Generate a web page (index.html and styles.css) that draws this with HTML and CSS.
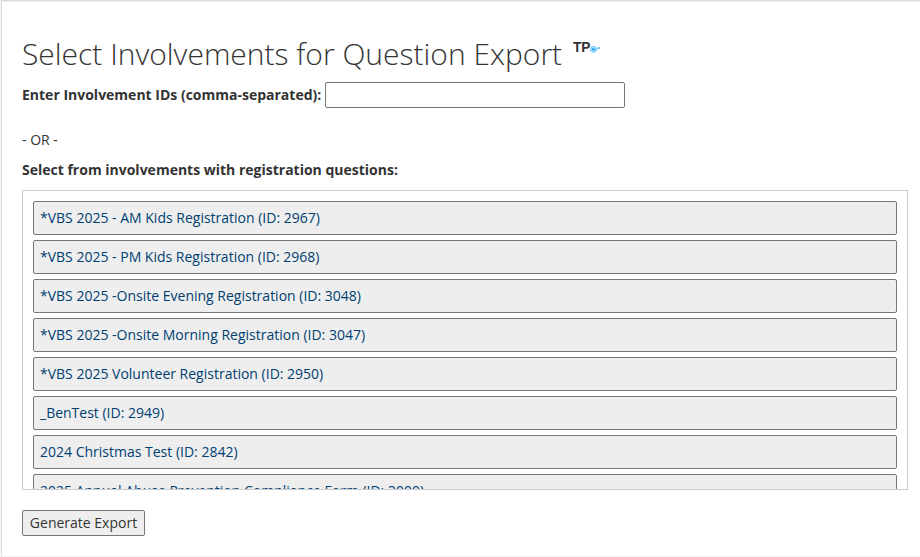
FILE: index.html
```html
<!DOCTYPE html>
<html lang="en">
<head>
<meta charset="utf-8">
<title>Question Export</title>
<link rel="stylesheet" href="styles.css">
</head>
<body>
<main class="panel">
  <header class="heading">
    <h1>Select Involvements for Question Export</h1>
    <svg class="logo" width="30" height="14" viewBox="0 0 30 14">
      <text class="logo-text" x="0" y="11" textLength="17.5" lengthAdjust="spacingAndGlyphs">TP</text>
      <circle cx="20.5" cy="8.3" r="3" fill="#b5e1fb" stroke="#5cc0f8" stroke-width="0.8"/>
      <circle cx="20.5" cy="8.3" r="1.4" fill="#1ba5f2"/>
      <path d="M22 10.5 Q23.6 9.6 24 7.4 L26 7.1" fill="none" stroke="#5cc0f8" stroke-width="0.8"/>
      <circle cx="26" cy="7" r="0.9" fill="#35b1f5"/>
    </svg>
  </header>
  <form>
    <div class="field">
      <label for="ids">Enter Involvement IDs (comma-separated):</label>
      <input id="ids" type="text">
    </div>
    <p class="or">- OR -</p>
    <p class="subhead">Select from involvements with registration questions:</p>
    <div class="list">
      <button type="button">*VBS 2025 - AM Kids Registration (ID: 2967)</button>
      <button type="button">*VBS 2025 - PM Kids Registration (ID: 2968)</button>
      <button type="button">*VBS 2025 -Onsite Evening Registration (ID: 3048)</button>
      <button type="button">*VBS 2025 -Onsite Morning Registration (ID: 3047)</button>
      <button type="button">*VBS 2025 Volunteer Registration (ID: 2950)</button>
      <button type="button">_BenTest (ID: 2949)</button>
      <button type="button">2024 Christmas Test (ID: 2842)</button>
      <button type="button">2025 Annual Abuse Prevention Compliance Form (ID: 3000)</button>
    </div>
    <button class="submit" type="button">Generate Export</button>
  </form>
</main>
</body>
</html>
```
FILE: styles.css
```css
* { box-sizing: border-box; }
body {
  margin: 0;
  background: #f5f5f5;
  color: #333;
  font: 14px/20px "Open Sans", sans-serif;
  overflow: hidden;
}
.panel {
  height: 557px;
  margin-left: 1px;
  padding: 36px 12px 0 20px;
  border: solid #ddd;
  border-width: 1px 0 1px 1px;
  border-bottom-color: #f3f3f3;
  background: #fff;
  box-shadow: inset 0 1px 0 #eee;
}
.heading { display: flex; height: 45px; }
h1 {
  margin: 0;
  font-size: 30px;
  font-weight: 300;
  line-height: 33px;
  white-space: nowrap;
}
.logo { margin: 4px 0 0 11px; overflow: visible; }
.logo-text { font: bold 14px "Liberation Sans", sans-serif; fill: #333; }
.field {
  display: flex;
  align-items: center;
  gap: 4px;
  height: 26px;
  font-weight: 700;
}
input {
  width: 300px;
  height: 26px;
  border: 1px solid #767676;
  border-radius: 2px;
  background: #fff;
}
p { margin: 0; }
.or { margin-top: 22px; }
.subhead { margin: 10px 0; font-weight: 700; }
.list {
  height: 300px;
  padding: 10px;
  border: 1px solid #ccc;
  overflow: hidden;
}
button {
  border: 1px solid #767676;
  border-radius: 2px;
  background: #eee;
  font: inherit;
}
.list button {
  display: block;
  width: 100%;
  height: 34px;
  margin-bottom: 5px;
  padding: 0 6px;
  color: #003f72;
  text-align: left;
}
.submit {
  display: block;
  width: 123px;
  height: 26px;
  margin-top: 20px;
  padding: 0;
  color: #333;
}
```
